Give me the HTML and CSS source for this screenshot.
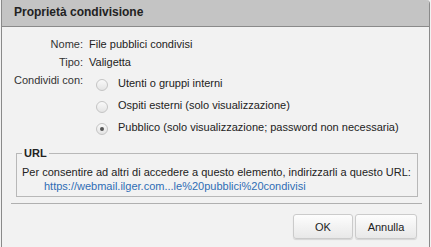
FILE: index.html
```html
<!DOCTYPE html>
<html lang="it">
<head>
<meta charset="utf-8">
<title>Proprietà condivisione</title>
<link rel="stylesheet" href="styles.css">
</head>
<body>
<div class="dialog">
  <div class="header">Proprietà condivisione</div>
  <div class="body">
    <div class="props">
      <div class="label">Nome:</div><div class="value">File pubblici condivisi</div>
      <div class="label">Tipo:</div><div class="value">Valigetta</div>
      <div class="label share">Condividi con:</div>
      <div class="options">
        <label class="opt"><span class="radio"></span>Utenti o gruppi interni</label>
        <label class="opt"><span class="radio"></span>Ospiti esterni (solo visualizzazione)</label>
        <label class="opt"><span class="radio checked"></span>Pubblico (solo visualizzazione; password non necessaria)</label>
      </div>
    </div>
    <fieldset class="url">
      <legend>URL</legend>
      <div class="hint">Per consentire ad altri di accedere a questo elemento, indirizzarli a questo URL:</div>
      <a class="link" href="#">https://webmail.ilger.com...le%20pubblici%20condivisi</a>
    </fieldset>
    <div class="sep"></div>
    <div class="buttons">
      <button class="btn ok">OK</button>
      <button class="btn cancel">Annulla</button>
    </div>
  </div>
</div>
</body>
</html>
```
FILE: styles.css
```css
html, body {
  margin: 0;
  padding: 0;
  background: #f2f2f2;
}
body {
  font-family: "Liberation Sans", Arial, sans-serif;
  font-size: 11px;
  color: #222;
  width: 431px;
  height: 247px;
  overflow: hidden;
}
.dialog {
  margin-left: 1px;
  width: 429px;
  height: 247px;
  border: 1px solid #8a8a8a;
  border-top: none;
  border-bottom: none;
  border-top-right-radius: 4px;
  background: #f2f2f2;
  box-sizing: border-box;
  overflow: hidden;
}
.header {
  height: 26px;
  background: #c4c4c4;
  border-bottom: 1px solid #8a8a8a;
  font-weight: bold;
  font-size: 12px;
  color: #222;
  line-height: 25px;
  padding-left: 12px;
}
.props {
  display: grid;
  grid-template-columns: 81px 1fr;
  column-gap: 6px;
  padding-top: 8px;
  line-height: 18px;
}
.label {
  text-align: right;
  color: #333;
}
.label.share {
  text-align: left;
  padding-left: 12px;
  white-space: nowrap;
}
.options {
  padding-left: 7px;
  display: flex;
  flex-direction: column;
}
.opt {
  display: flex;
  align-items: center;
  height: 22px;
  color: #222;
}
.opt:first-child {
  margin-top: 1px;
}
.radio {
  width: 10px;
  height: 10px;
  border-radius: 50%;
  border: 1px solid #c4c4c4;
  background: linear-gradient(#f9f9f9, #e4e4e4);
  margin-right: 10px;
  position: relative;
  top: 2px;
  flex: none;
}
.radio.checked::after {
  content: "";
  position: absolute;
  left: 3px;
  top: 3px;
  width: 4px;
  height: 4px;
  border-radius: 50%;
  background: #555;
}
.url {
  margin: 8px 0 0 14px;
  width: 402px;
  box-sizing: border-box;
  border: 1px solid #b8b8b8;
  padding: 5px 5px 3px 5px;
  min-width: 0;
}
.url legend {
  font-weight: bold;
  font-size: 11px;
  line-height: 14px;
  padding: 0 2px;
  margin-left: 0;
  color: #222;
}
.hint {
  line-height: 14px;
  white-space: nowrap;
}
.link {
  display: block;
  padding-left: 22px;
  color: #2f6db5;
  text-decoration: none;
  line-height: 14px;
}
.sep {
  margin: 6px 0 0 9px;
  width: 411px;
  border-top: 1px solid #b0b0b0;
}
.buttons {
  display: flex;
  justify-content: flex-end;
  gap: 2px;
  padding: 10px 12px 0 0;
}
.btn {
  font-family: "Liberation Sans", Arial, sans-serif;
  font-size: 11px;
  color: #222;
  height: 25px;
  border: 1px solid #cbcbcb;
  border-radius: 3px;
  background: linear-gradient(#fdfdfd, #e8e8e8);
  box-shadow: 0 1px 1px rgba(0, 0, 0, 0.12);
  padding: 0;
}
.btn.ok { width: 60px; }
.btn.cancel { width: 62px; }
```
